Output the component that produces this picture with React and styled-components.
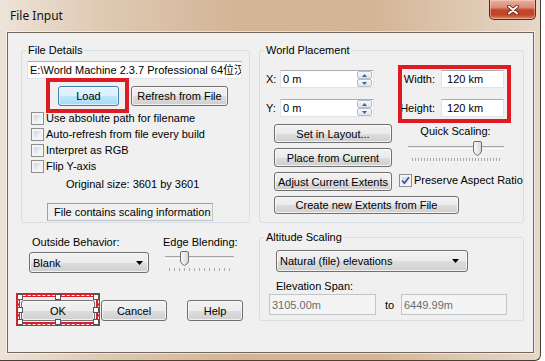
import React from "react";
import styled, { createGlobalStyle, css } from "styled-components";

const GlobalStyle = createGlobalStyle`
  html, body {
    margin: 0;
    padding: 0;
    background: #fff;
  }
  body {
    font-family: "Liberation Sans", Arial, "Noto Sans CJK SC", sans-serif;
    font-size: 11px;
    color: #000;
  }
`;

const Window = styled.div`
  width: 541px;
  height: 361px;
  box-sizing: border-box;
  display: flex;
  flex-direction: column;
  padding: 0 6px 7px 7px;
  border-right: 1px solid #4a3d33;
  border-bottom: 1px solid #4a3d33;
  border-bottom-right-radius: 6px;
  background: linear-gradient(
    90deg,
    #eee3d8 0%,
    #dfcab4 18%,
    #d3b495 45%,
    #d4b697 70%,
    #e6d7c7 100%
  );
`;

const TitleBar = styled.div`
  height: 32px;
  flex-shrink: 0;
  display: flex;
  align-items: flex-start;
  justify-content: space-between;
  margin-right: -2px;
`;

const Title = styled.div`
  padding: 9px 0 0 3px;
  font-family: "Noto Sans", "Liberation Sans", sans-serif;
  font-size: 12px;
  line-height: 14px;
  color: #111;
`;

const CloseButton = styled.div`
  width: 47px;
  height: 20px;
  box-sizing: border-box;
  display: flex;
  align-items: center;
  justify-content: center;
  border: 1px solid #5a2a20;
  border-top: none;
  border-radius: 0 0 5px 5px;
  background: linear-gradient(
    #eab0a0 0%,
    #d98a76 40%,
    #c4452c 52%,
    #c2452a 78%,
    #dc8868 100%
  );
  box-shadow: inset 0 0 0 1px rgba(255, 220, 200, 0.45);
`;

const Client = styled.div`
  flex: 1;
  display: flex;
  gap: 9px;
  padding-left: 13px;
  background: #f0f0f0;
  border: 1px solid #74685e;
  box-shadow: 0 0 0 1px rgba(255, 255, 255, 0.55);
`;

const Column = styled.div`
  display: flex;
  flex-direction: column;
  width: ${(p) => p.$width}px;
`;

const Group = styled.fieldset`
  margin: ${(p) => p.$top}px 0 0 0;
  padding: 0 0 ${(p) => p.$bottom}px 0;
  min-width: 0;
  box-sizing: border-box;
  border: 1px solid #d5dfe5;
  border-radius: 3px;
  display: flex;
  flex-direction: column;
  align-items: flex-start;
`;

const Legend = styled.legend`
  margin-left: 4px;
  padding: 0 2px;
  line-height: 13px;
  font-size: 11px;
`;

const buttonBase = css`
  box-sizing: border-box;
  height: ${(p) => p.$h || 19}px;
  width: ${(p) => p.$w}px;
  display: flex;
  align-items: center;
  justify-content: center;
  border: 1px solid #707070;
  border-radius: 3px;
  background: linear-gradient(#f2f2f2 0%, #ebebeb 50%, #dddddd 51%, #cfcfcf 100%);
  box-shadow: inset 0 0 0 1px rgba(255, 255, 255, 0.7);
  font-size: 11px;
  white-space: nowrap;
`;

const Button = styled.div`
  ${buttonBase}
  margin-left: ${(p) => p.$ml || 0}px;
  ${(p) =>
    p.$focus &&
    css`
      border-color: #3c7fb1;
      background: linear-gradient(#e5f4fc 0%, #d9f0fc 50%, #bee6fd 51%, #a7d9f5 100%);
      box-shadow: inset 0 0 0 1px rgba(255, 255, 255, 0.6);
    `}
`;

const Annotated = styled.div`
  position: relative;
  display: flex;
`;

const RedBox = styled.div`
  position: absolute;
  left: -12px;
  right: -10px;
  top: -8px;
  bottom: -7px;
  border: 4px solid #e01a22;
  pointer-events: none;
`;

const Selection = styled.div`
  position: absolute;
  left: -5px;
  right: -5px;
  top: -7px;
  bottom: -5px;
  border: 4px solid #d4222c;
  pointer-events: none;

  &::before {
    content: "";
    position: absolute;
    inset: -2.5px;
    border: 1px dashed #fff;
  }
`;

const Handle = styled.span`
  position: absolute;
  left: ${(p) => p.$x};
  top: ${(p) => p.$y};
  width: 4px;
  height: 4px;
  transform: translate(-50%, -50%);
  background: #fff;
  border: 1px solid #555;
`;

const PathBox = styled.div`
  margin: 4px 0 0 5px;
  width: 215px;
  height: 18px;
  box-sizing: border-box;
  padding-left: 2px;
  line-height: 16px;
  white-space: nowrap;
  overflow: hidden;
  background: #fff;
  border: 1px solid #e2e3ea;
  border-top-color: #abadb3;
`;

const ButtonRow = styled.div`
  display: flex;
  align-items: center;
  margin: ${(p) => p.$mt}px 0 0 ${(p) => p.$ml || 0}px;
`;

const CheckList = styled.div`
  display: flex;
  flex-direction: column;
  margin: 4px 0 0 9px;
`;

const CheckRow = styled.div`
  display: flex;
  align-items: center;
  gap: 2px;
  height: 16px;
  white-space: nowrap;
`;

const CheckBox = styled.span`
  width: 13px;
  height: 13px;
  box-sizing: border-box;
  flex-shrink: 0;
  display: flex;
  align-items: center;
  justify-content: center;
  border: 1px solid #8e8f8f;
  background: linear-gradient(135deg, #c9cdd3 0%, #eceef0 60%, #f9f9f9 100%);
  box-shadow: inset 0 0 0 2px #f4f4f4;
`;

const Text = styled.div`
  line-height: 13px;
  white-space: nowrap;
  margin: ${(p) => p.$mt || 0}px 0 0 ${(p) => p.$ml || 0}px;
  color: ${(p) => p.$color || "#000"};
  text-align: ${(p) => p.$align || "left"};
`;

const InfoBox = styled.div`
  margin: 12px 0 0 25px;
  width: 166px;
  height: 18px;
  box-sizing: border-box;
  padding-left: 6px;
  line-height: 16px;
  border: 1px solid #c2c2c2;
  border-top-color: #a0a0a0;
  border-left-color: #a0a0a0;
  background: #f0f0f0;
`;

const OptionsRow = styled.div`
  display: flex;
  margin-top: 13px;
`;

const OptionCol = styled.div`
  display: flex;
  flex-direction: column;
  margin-left: ${(p) => p.$ml}px;
`;

const Combo = styled.div`
  ${buttonBase}
  justify-content: space-between;
  padding: 0 ${(p) => p.$pr}px 0 3px;
  margin: ${(p) => p.$mt}px 0 0 ${(p) => p.$ml || 0}px;
`;

const SliderBox = styled.div`
  position: relative;
  width: ${(p) => p.$w}px;
  height: 20px;
  margin: ${(p) => p.$mt}px 0 0 ${(p) => p.$ml}px;
`;

const Track = styled.div`
  margin-top: 5px;
  height: 1px;
  border-top: 1px solid #a7a7a7;
  border-bottom: 1px solid #fff;
  background: #e2e2e2;
`;

const Ticks = styled.div`
  margin: 9px 4px 0 4px;
  height: 3px;
  background: repeating-linear-gradient(
    90deg,
    #a9a9a9 0 1px,
    transparent 1px ${(p) => p.$step}px
  );
`;

const Thumb = styled.svg`
  position: absolute;
  top: 0;
  left: ${(p) => p.$left}px;
`;

const ButtonsRow = styled.div`
  display: flex;
  margin-top: 27px;
`;

const Field = styled.div`
  display: flex;
  align-items: center;
  box-sizing: border-box;
  width: ${(p) => p.$w}px;
  height: ${(p) => p.$h || 18}px;
  padding-left: 2px;
  margin-left: ${(p) => p.$ml || 0}px;
  background: #fff;
  border: 1px solid #e2e3ea;
  border-top-color: #abadb3;
  white-space: nowrap;
  ${(p) =>
    p.$disabled &&
    css`
      background: #f4f4f4;
      border-color: #c3c6c9;
      color: #6d6d6d;
    `}
`;

const SpinCol = styled.div`
  margin-left: auto;
  margin-right: 1px;
  display: flex;
  flex-direction: column;
  width: 15px;
  height: 16px;
`;

const SpinBtn = styled.div`
  flex: 1;
  display: flex;
  align-items: center;
  justify-content: center;
  box-sizing: border-box;
  border: 1px solid #b3bfcc;
  border-radius: 2px;
  background: linear-gradient(#f7f9fb, #dde4ec);
`;

const TopSection = styled.div`
  display: flex;
  align-items: flex-start;
`;

const XYCol = styled.div`
  display: flex;
  flex-direction: column;
  gap: 11px;
  margin: 13px 0 0 6px;
`;

const InputRow = styled.div`
  display: flex;
  align-items: center;
`;

const Label = styled.span`
  width: ${(p) => p.$w}px;
  flex-shrink: 0;
  text-align: ${(p) => p.$align || "left"};
  white-space: nowrap;
  margin-left: ${(p) => p.$ml || 0}px;
  margin-right: ${(p) => p.$mr || 0}px;
`;

const SizeBox = styled.div`
  position: relative;
  box-sizing: border-box;
  width: 113px;
  height: 58px;
  margin: 8px 0 0 24px;
  padding-top: 5px;
  display: flex;
  flex-direction: column;
  gap: 11px;

  &::after {
    content: "";
    position: absolute;
    inset: 0;
    border: 4px solid #e01a22;
  }
`;

const PlacementGrid = styled.div`
  display: grid;
  grid-template-columns: 118px 113px;
  grid-auto-rows: 19px;
  column-gap: 7px;
  row-gap: 5px;
  margin: 1px 0 0 14px;
`;

const ScalingBlock = styled.div`
  grid-column: 2;
  grid-row: 1 / span 2;
  display: flex;
  flex-direction: column;
  padding-top: 1px;
`;

const WideCell = styled.div`
  grid-column: 1 / span 2;
`;

const Arrow = () => (
  <svg width="7" height="4" viewBox="0 0 7 4">
    <path d="M0 0 H7 L3.5 4 Z" fill="#000" />
  </svg>
);

const SpinArrow = ({ up }) => (
  <svg width="5" height="3" viewBox="0 0 5 3">
    <path d={up ? "M0 3 H5 L2.5 0 Z" : "M0 0 H5 L2.5 3 Z"} fill="#4b5f88" />
  </svg>
);

const Check = ({ checked, children }) => (
  <CheckRow>
    <CheckBox>
      {checked && (
        <svg width="9" height="9" viewBox="0 0 9 9">
          <path d="M1 4.5 L3.4 7.2 L8 1.2" fill="none" stroke="#3a56a0" strokeWidth="1.8" />
        </svg>
      )}
    </CheckBox>
    {children}
  </CheckRow>
);

const Slider = ({ width, ml, mt, thumb, step }) => (
  <SliderBox $w={width} $ml={ml} $mt={mt}>
    <Track />
    <Ticks $step={step} />
    <Thumb $left={thumb} width="9" height="15" viewBox="0 0 9 15">
      <defs>
        <linearGradient id={`thumb${thumb}`} x1="0" x2="1" y1="0" y2="0">
          <stop offset="0" stopColor="#fbfbfb" />
          <stop offset="1" stopColor="#d6d6d6" />
        </linearGradient>
      </defs>
      <path
        d="M2 0.5 H7 A1.5 1.5 0 0 1 8.5 2 V10 Q8.5 12.5 4.5 14.5 Q0.5 12.5 0.5 10 V2 A1.5 1.5 0 0 1 2 0.5 Z"
        fill={`url(#thumb${thumb})`}
        stroke="#6f6f6f"
      />
    </Thumb>
  </SliderBox>
);

const SpinField = ({ value }) => (
  <Field $w={94}>
    {value}
    <SpinCol>
      <SpinBtn>
        <SpinArrow up />
      </SpinBtn>
      <SpinBtn>
        <SpinArrow />
      </SpinBtn>
    </SpinCol>
  </Field>
);

const handles = [
  ["0%", "0%"],
  ["50%", "0%"],
  ["100%", "0%"],
  ["0%", "50%"],
  ["100%", "50%"],
  ["0%", "100%"],
  ["50%", "100%"],
  ["100%", "100%"],
];

export default function App() {
  return (
    <>
      <GlobalStyle />
      <Window>
        <TitleBar>
          <Title>File Input</Title>
          <CloseButton>
            <svg width="12" height="10" viewBox="0 0 12 10">
              <path d="M2 1.5 L10 8.5 M10 1.5 L2 8.5" stroke="#4a1c12" strokeWidth="3.6" strokeLinecap="round" />
              <path d="M2 1.5 L10 8.5 M10 1.5 L2 8.5" stroke="#fff" strokeWidth="2" strokeLinecap="round" />
            </svg>
          </CloseButton>
        </TitleBar>

        <Client>
          <Column $width={229}>
            <Group $top={11} $bottom={1}>
              <Legend>File Details</Legend>
              <PathBox>{"E:\\World Machine 2.3.7 Professional 64位汉化版\\"}</PathBox>
              <ButtonRow $mt={7} $ml={36}>
                <Annotated>
                  <Button $w={61} $h={20} $focus>
                    Load
                  </Button>
                  <RedBox />
                </Annotated>
                <Button $w={97} $h={20} $ml={12}>
                  Refresh from File
                </Button>
              </ButtonRow>
              <CheckList>
                <Check>Use absolute path for filename</Check>
                <Check>Auto-refresh from file every build</Check>
                <Check>Interpret as RGB</Check>
                <Check>Flip Y-axis</Check>
              </CheckList>
              <Text $mt={4} $ml={44}>
                Original size: 3601 by 3601
              </Text>
              <InfoBox>File contains scaling information</InfoBox>
            </Group>

            <OptionsRow>
              <OptionCol $ml={8}>
                <Text $ml={3}>Outside Behavior:</Text>
                <Combo $w={120} $h={21} $mt={3} $pr={5}>
                  Blank
                  <Arrow />
                </Combo>
              </OptionCol>
              <OptionCol $ml={14}>
                <Text>Edge Blending:</Text>
                <Slider width={69} ml={2} mt={2} thumb={15} step={5} />
              </OptionCol>
            </OptionsRow>

            <ButtonsRow>
              <Annotated>
                <Button $w={74} $h={21}>
                  OK
                </Button>
                <Selection>
                  {handles.map(([x, y]) => (
                    <Handle key={x + y} $x={x} $y={y} />
                  ))}
                </Selection>
              </Annotated>
              <Button $w={66} $h={21} $ml={6}>
                Cancel
              </Button>
              <Button $w={56} $h={21} $ml={20}>
                Help
              </Button>
            </ButtonsRow>
          </Column>

          <Column $width={265}>
            <Group $top={11} $bottom={7}>
              <Legend>World Placement</Legend>
              <TopSection>
                <XYCol>
                  <InputRow>
                    <Label $w={14}>X:</Label>
                    <SpinField value="0 m" />
                  </InputRow>
                  <InputRow>
                    <Label $w={14}>Y:</Label>
                    <SpinField value="0 m" />
                  </InputRow>
                </XYCol>
                <SizeBox>
                  <InputRow>
                    <Label $w={37} $align="right" $mr={6}>
                      Width:
                    </Label>
                    <Field $w={63}>&nbsp;120 km</Field>
                  </InputRow>
                  <InputRow>
                    <Label $w={37} $align="right" $mr={6}>
                      Height:
                    </Label>
                    <Field $w={63}>&nbsp;120 km</Field>
                  </InputRow>
                </SizeBox>
              </TopSection>
              <PlacementGrid>
                <Button $w={118}>Set in Layout...</Button>
                <ScalingBlock>
                  <Text $align="center">Quick Scaling:</Text>
                  <Slider width={96} ml={9} mt={3} thumb={65} step={3} />
                </ScalingBlock>
                <Button $w={118}>Place from Current</Button>
                <Button $w={118}>Adjust Current Extents</Button>
                <Check checked>Preserve Aspect Ratio</Check>
                <WideCell>
                  <Button $w={185} $h={18}>
                    Create new Extents from File
                  </Button>
                </WideCell>
              </PlacementGrid>
            </Group>

            <Group $top={8} $bottom={5}>
              <Legend>Altitude Scaling</Legend>
              <Combo $w={192} $h={22} $mt={6} $ml={16} $pr={8}>
                Natural (file) elevations
                <Arrow />
              </Combo>
              <Text $mt={8} $ml={16}>
                Elevation Span:
              </Text>
              <ButtonRow $mt={1} $ml={9}>
                <Field $w={107} $h={21} $disabled>
                  3105.00m
                </Field>
                <Label $w={16} $ml={9}>
                  to
                </Label>
                <Field $w={106} $h={21} $disabled>
                  6449.99m
                </Field>
              </ButtonRow>
            </Group>
          </Column>
        </Client>
      </Window>
    </>
  );
}
